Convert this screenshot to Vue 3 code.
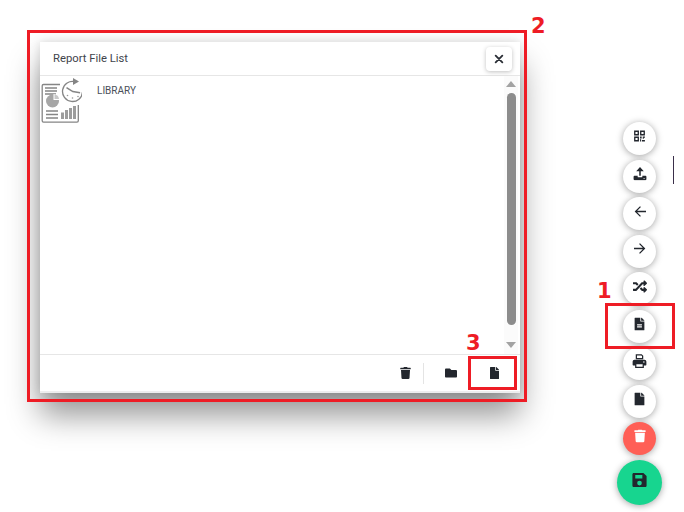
<script setup>
const trash = { box: '0 0 448 512', d: 'M432 32H312l-9.4-18.7A24 24 0 0 0 281.1 0H166.8a23.72 23.72 0 0 0-21.4 13.3L136 32H16A16 16 0 0 0 0 48v32a16 16 0 0 0 16 16h416a16 16 0 0 0 16-16V48a16 16 0 0 0-16-16zM53.2 467a48 48 0 0 0 47.9 45h245.8a48 48 0 0 0 47.9-45L416 128H32z' }
const folder = { box: '0 0 512 512', d: 'M464 128H272l-64-64H48C21.49 64 0 85.49 0 112v288c0 26.51 21.49 48 48 48h416c26.51 0 48-21.49 48-48V176c0-26.51-21.49-48-48-48z' }
const file = { box: '0 0 384 512', d: 'M224 136V0H24C10.7 0 0 10.7 0 24v464c0 13.3 10.7 24 24 24h336c13.3 0 24-10.7 24-24V160H248c-13.2 0-24-10.8-24-24zm160-14.1v6.1H256V0h6.1c6.4 0 12.5 2.5 17 7l97.9 98c4.5 4.5 7 10.6 7 16.9z' }
const fileAlt = { box: '0 0 384 512', d: 'M224 136V0H24C10.7 0 0 10.7 0 24v464c0 13.3 10.7 24 24 24h336c13.3 0 24-10.7 24-24V160H248c-13.2 0-24-10.8-24-24zm64 244c0 6.6-5.4 12-12 12H108c-6.6 0-12-5.4-12-12v-20c0-6.600 5.400-12 12-12h168c6.600 0 12 5.400 12 12zm0-80c0 6.600-5.400 12-12 12H108c-6.600 0-12-5.400-12-12v-20c0-6.600 5.400-12 12-12h168c6.600 0 12 5.400 12 12zm96-178.100v6.100H256V0h6.100c6.400 0 12.500 2.500 17 7l97.900 98c4.500 4.500 7 10.600 7 16.900z' }
const qr = { box: '0 0 24 24', d: 'M2 2h9v9H2zm2.500 2.500v4h4v-4zM13 2h9v9h-9zm2.500 2.500v4h4v-4zM2 13h9v9H2zm2.500 2.500v4h4v-4zM13 13h3v3.500h-3zm5 0h4v2h-2v2h-2zm-5 5h2v4h-2zm3.500 1.500H22V22h-5.500z' }
const upload = { box: '0 0 24 24', d: 'M12 1l6.500 7h-5.200v8h-2.600V8H5.500zM2.500 16H8v1.500c0 .6.400 1 1 1h6c.6 0 1-.4 1-1V16h5.500c.8 0 1.500.7 1.500 1.500V22c0 .8-.7 1.500-1.500 1.500h-19C1.700 23.500 1 22.800 1 22v-4.500C1 16.700 1.700 16 2.500 16zm16.500 3.500a1 1 0 1 0 0 2 1 1 0 0 0 0-2z' }
const back = { box: '0 0 24 24', d: 'M21 11H7.800l5.600-5.600L12 4l-8 8 8 8 1.400-1.400L7.800 13H21z' }
const forward = { box: '0 0 24 24', d: 'M3 11h13.200l-5.600-5.600L12 4l8 8-8 8-1.400-1.400 5.600-5.600H3z' }
const shuffle = { box: '0 0 512 512', d: 'M504.971 359.029c9.373 9.373 9.373 24.569 0 33.941l-80 79.984c-15.01 15.01-40.971 4.49-40.971-16.971V416h-58.785a12.004 12.004 0 0 1-8.773-3.812l-70.556-75.596 53.333-57.143L352 336h32v-39.981c0-21.438 25.943-31.998 40.971-16.971l80 79.981zM12 176h84l52.781 56.551 53.333-57.143-70.556-75.596A11.999 11.999 0 0 0 122.785 96H12c-6.627 0-12 5.373-12 12v56c0 6.627 5.373 12 12 12zm372 0v39.984c0 21.46 25.961 31.98 40.971 16.971l80-79.984c9.373-9.373 9.373-24.569 0-33.941l-80-79.981C409.943 24.021 384 34.582 384 56.019V96h-58.785a12.004 12.004 0 0 0-8.773 3.812L96 336H12c-6.627 0-12 5.373-12 12v56c0 6.627 5.373 12 12 12h110.785c3.326 0 6.503-1.381 8.773-3.812L352 176h32z' }
const printer = { box: '0 0 24 24', d: 'M6 1h9.500L18 3.500V9H6zm2 2v4h8V4.300L15 3zM4 10h16c1.700 0 3 1.300 3 3v5c0 .6-.4 1-1 1h-3v4H5v-4H2c-.6 0-1-.4-1-1v-5c0-1.700 1.300-3 3-3zm3 7v4h10v-4zm12-4.500a1.200 1.200 0 1 0 0 2.400 1.200 1.200 0 0 0 0-2.400z' }
const save = { box: '0 0 24 24', d: 'M4 2h13.500L22 6.500V20c0 1.100-.9 2-2 2H4c-1.100 0-2-.9-2-2V4c0-1.100.9-2 2-2zm2 3v5h10V5zm6 8a3.300 3.300 0 1 0 0 6.600 3.300 3.300 0 0 0 0-6.600z' }

const fabs = [
  { icon: qr, size: 13 },
  { icon: upload, size: 14 },
  { icon: back, size: 16 },
  { icon: forward, size: 16 },
  { icon: shuffle, size: 14 },
  { icon: fileAlt, size: 13 },
  { icon: printer, size: 15 },
  { icon: file, size: 13 }
]
</script>

<template>
  <div class="page">
    <section class="dialog">
      <header class="head">
        <span class="title">Report File List</span>
        <button class="close" type="button" aria-label="Close">
          <svg viewBox="0 0 12 12" width="10" height="10"><path d="M2 2l8 8M10 2l-8 8" stroke="#2b2f36" stroke-width="2.200" stroke-linecap="round" /></svg>
        </button>
      </header>
      <div class="body">
        <div class="list">
          <div class="item">
            <svg class="lib" viewBox="40 78 42 46" width="42" height="46">
              <g fill="none" stroke="#858585" stroke-width="1.300">
                <path d="M60 84.500H43.500a1.300 1.300 0 0 0-1.300 1.300v35a1.300 1.300 0 0 0 1.300 1.300h33.500a1.300 1.300 0 0 0 1.300-1.300V105" />
                <path d="M75 81.800A10 10 0 1 0 82.500 92" stroke-width="1.300" />
                <path d="M66.500 87.600l6.300 4 7.300 1.100" stroke-width="1.500" />
                <path d="M45 88h12M45 91h12M45 94h11M46 111h12M46 114.500h12M46 118h12" />
              </g>
              <path d="M73 78l6 3.500-6 3.500z" fill="#858585" />
              <circle cx="67.500" cy="95.500" r=".8" fill="#999" /><circle cx="72.500" cy="98" r=".8" fill="#999" /><circle cx="78" cy="96.500" r=".8" fill="#999" />
              <circle cx="52.500" cy="101" r="6.500" fill="#a6a6a6" />
              <path d="M53.500 100v-6a6 6 0 0 1 6 6z" fill="#fff" />
              <path d="M54.500 99v-4.500a5 5 0 0 1 4.500 4.500z" fill="#c8c8c8" />
              <path d="M61 119v-6.500h3v6.500zM65 119v-9h3v9zM69 119v-11h3v11zM73 119v-13h3v13z" fill="#9c9c9c" />
            </svg>
            <span class="lib-name">LIBRARY</span>
          </div>
        </div>
        <div class="scroll">
          <span class="arrow up"></span>
          <span class="thumb"></span>
          <span class="arrow down"></span>
        </div>
      </div>
      <footer class="foot">
        <svg class="ico" :viewBox="trash.box" width="11" height="12"><path :d="trash.d" /></svg>
        <span class="sep"></span>
        <svg class="ico folder" :viewBox="folder.box" width="12" height="12"><path :d="folder.d" /></svg>
        <svg class="ico file" :viewBox="file.box" width="9" height="12"><path :d="file.d" /></svg>
      </footer>
    </section>

    <nav class="fabs">
      <button v-for="(f, i) in fabs" :key="i" class="fab" type="button">
        <svg class="ico lift" :viewBox="f.icon.box" :width="f.size" :height="f.size"><path :d="f.icon.d" /></svg>
      </button>
      <button class="fab danger" type="button">
        <svg class="lift" :viewBox="trash.box" width="12" height="13" fill="#fff"><path :d="trash.d" /></svg>
      </button>
      <button class="fab main" type="button">
        <svg class="ico lift" :viewBox="save.box" width="17" height="17"><path :d="save.d" /></svg>
      </button>
    </nav>

    <span class="cursor"></span>

    <span class="mark box2"></span>
    <span class="mark box3"></span>
    <span class="mark box1"></span>
    <span class="num n2">2</span>
    <span class="num n3">3</span>
    <span class="num n1">1</span>
  </div>
</template>

<style>
html, body { margin: 0; background: #fff; }
</style>

<style scoped>
.page {
  position: relative;
  width: 684px;
  height: 512px;
  overflow: hidden;
  background: #fff;
  font-family: Roboto, "Liberation Sans", sans-serif;
}
.dialog {
  position: absolute;
  left: 40px;
  top: 42px;
  width: 480px;
  height: 351px;
  box-sizing: border-box;
  border-bottom: 2px solid #eeeeee;
  display: flex;
  flex-direction: column;
  background: #fff;
  box-shadow: 0 22px 30px rgba(0, 0, 0, .42), 0 0 10px rgba(0, 0, 0, .14);
}
.head {
  height: 33px;
  padding: 0 8px 0 13px;
  display: flex;
  align-items: center;
  justify-content: space-between;
  border-bottom: 1px solid #e6e6e6;
}
.title { font-size: 11.250px; color: #3f444c; }
.close {
  width: 26px;
  height: 24px;
  padding: 0;
  border: 0;
  border-radius: 4px;
  background: #fff;
  display: flex;
  align-items: center;
  justify-content: center;
  box-shadow: 0 1px 4px rgba(0, 0, 0, .25);
}
.body { flex: 1; display: flex; min-height: 0; }
.list { flex: 1; padding-top: 2px; }
.item { display: flex; align-items: flex-start; gap: 15px; }
.lib { display: block; }
.lib-name { font-size: 10px; color: #4a4f58; margin-top: 7px; }
.scroll {
  width: 14px;
  margin-right: 2px;
  padding: 5px 0 6px;
  box-sizing: border-box;
  display: flex;
  flex-direction: column;
  align-items: center;
  background: #fbfbfb;
}
.thumb { flex: 1; width: 9px; margin: 6px 0 17px; border-radius: 5px; background: #8c8c8c; }
.arrow { width: 0; height: 0; border-left: 5px solid transparent; border-right: 5px solid transparent; }
.arrow.up { border-bottom: 6px solid #a3a3a3; }
.arrow.down { border-top: 6px solid #a3a3a3; }
.foot {
  height: 36px;
  border-top: 1px solid #e6e6e6;
  display: flex;
  align-items: center;
  padding-left: 360px;
}
.sep { width: 1px; height: 21px; margin: 0 21px 0 12px; background: #e4e4e4; }
.ico { fill: #23272e; display: block; }
.lift { transform: translateY(-2.500px); }
.folder { margin-right: 33px; }
.fabs {
  position: absolute;
  right: 22px;
  top: 122px;
  width: 45px;
  display: flex;
  flex-direction: column;
  align-items: center;
  gap: 4.500px;
}
.fab {
  width: 33px;
  height: 33px;
  padding: 0;
  border: 0;
  border-radius: 50%;
  background: #fff;
  display: flex;
  align-items: center;
  justify-content: center;
  box-shadow: 0 1px 7px rgba(0, 0, 0, .36);
}
.fab.danger { background: #ff5f56; }
.fab.main { width: 45px; height: 45px; background: #17d58f; }
.cursor { position: absolute; left: 673px; top: 156px; width: 1px; height: 28px; background: #3a2f4a; }
.mark { position: absolute; box-sizing: border-box; border: 3px solid #ee1c25; }
.box2 { left: 27px; top: 30px; width: 500px; height: 372px; }
.box3 { left: 468px; top: 356px; width: 49px; height: 34px; }
.box1 { left: 605px; top: 303px; width: 70px; height: 46px; }
.num {
  position: absolute;
  font-family: "DejaVu Sans", sans-serif;
  font-weight: 700;
  font-size: 21px;
  line-height: 24px;
  color: #ee1c25;
}
.n2 { left: 531px; top: 14px; }
.n3 { left: 466px; top: 331px; }
.n1 { left: 597px; top: 279px; }
</style>
